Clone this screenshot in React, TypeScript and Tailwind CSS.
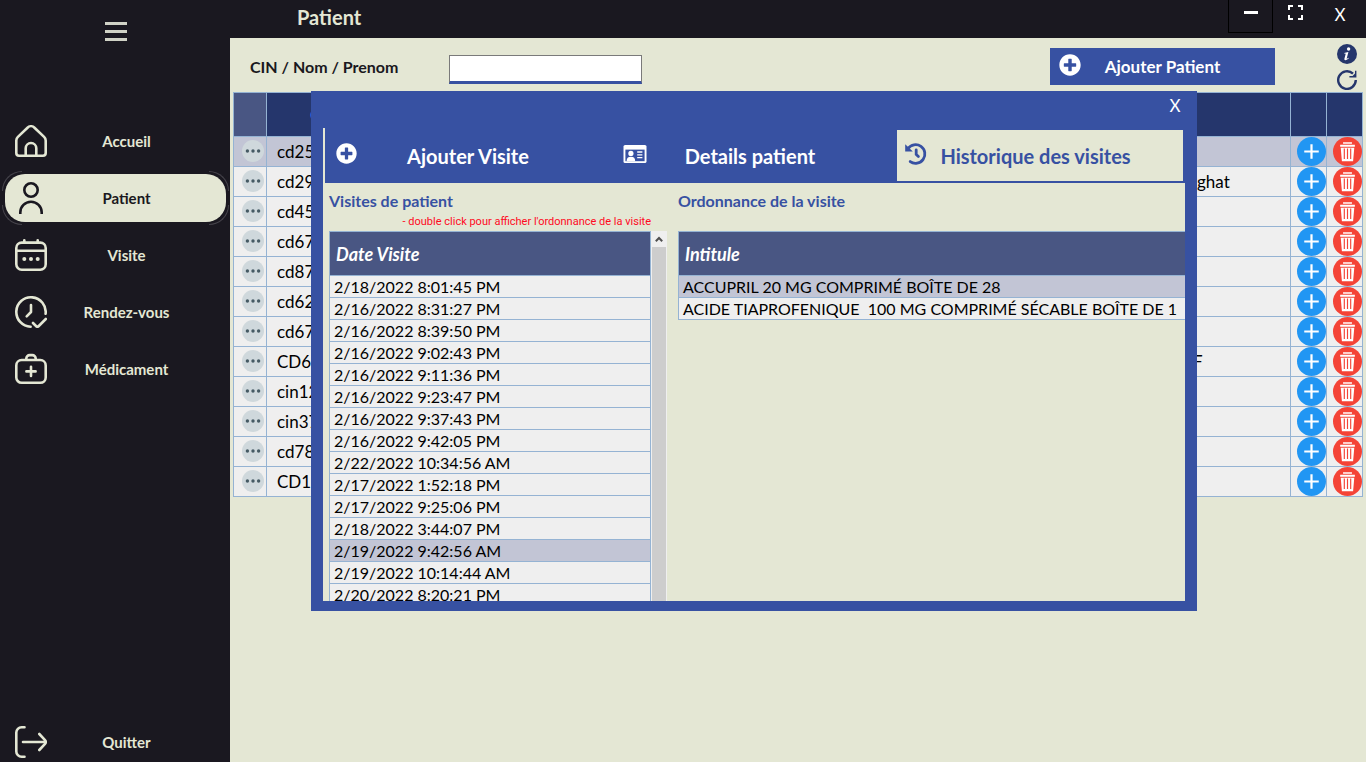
import type { ReactNode } from 'react';
import { FaPlusCircle } from 'react-icons/fa';

const navLine = {
  viewBox: '0 0 32 32',
  fill: 'none',
  stroke: 'currentColor',
  strokeWidth: 2.6,
  strokeLinecap: 'round' as const,
  strokeLinejoin: 'round' as const,
  className: 'size-8 shrink-0',
  'aria-hidden': true,
};

const HomeIcon = () => (
  <svg {...navLine}>
    <path d="M1.3 15.5a5 5 0 0 1 1.6-3.6l9.6-9.2a5 5 0 0 1 7 0l9.6 9.2a5 5 0 0 1 1.6 3.6V28a2.7 2.7 0 0 1-2.7 2.7H4A2.7 2.7 0 0 1 1.3 28z" />
    <path d="M10.7 30.5v-7.2a5.3 5.3 0 0 1 10.6 0v7.2" />
  </svg>
);

const UserIcon = () => (
  <svg {...navLine} strokeLinecap="butt">
    <circle cx="16" cy="8" r="6.7" />
    <path d="M5.3 32v-1.6a10.7 10.7 0 0 1 21.4 0V32" />
  </svg>
);

const CalendarIcon = () => (
  <svg {...navLine}>
    <rect x="1.3" y="3.6" width="29.4" height="27.1" rx="5.4" />
    <path d="M1.3 11.7h29.4M9.3 1.3v2M22.7 1.3v2" />
    <g fill="currentColor" stroke="none">
      <circle cx="9.3" cy="20" r="2" />
      <circle cx="16" cy="20" r="2" />
      <circle cx="22.7" cy="20" r="2" />
    </g>
  </svg>
);

const ClockIcon = () => (
  <svg {...navLine}>
    <path d="M30.6 17.8A14.7 14.7 0 1 0 15.6 30.7" />
    <path d="M16 9v7l-4.3 4.3" />
    <path d="M18 27l3 3a2 2 0 0 0 2.8 0l7-7" />
  </svg>
);

const MedicalIcon = () => (
  <svg {...navLine}>
    <rect x="1.3" y="7" width="29.4" height="22.8" rx="5.4" />
    <path d="M11.3 6.6V5.5a3.4 3.4 0 0 1 3.4-3.4h2.6a3.4 3.4 0 0 1 3.4 3.4v1.1M16 13.8v9.2M11.4 18.4h9.2" />
  </svg>
);

const QuitIcon = () => (
  <svg {...navLine}>
    <path d="M9.5 1.3H6.6a5.3 5.3 0 0 0-5.3 5.3v18.8a5.3 5.3 0 0 0 5.3 5.3h2.9" />
    <path d="M8 16h22.5M24.3 8l5.5 5.8a3.3 3.3 0 0 1 0 4.4L24.3 24" />
  </svg>
);

const CardIcon = () => (
  <svg viewBox="0 0 24 24" className="mb-1 size-6 shrink-0" aria-hidden>
    <rect x="0.5" y="3" width="23" height="18" rx="1.6" fill="#fff" />
    <path d="M2.4 7.6h19.2v11.6H2.4z" fill="#3751a2" />
    <circle cx="7.9" cy="11.4" r="2.6" fill="#fff" />
    <path d="M3.6 19.2c0-3 1.4-4.4 4.3-4.4s4.3 1.4 4.3 4.4z" fill="#fff" />
    <path d="M14.2 10h5.2M14.2 12.8h5.2M14.2 15.6h5.2" stroke="#fff" strokeWidth="1.3" />
  </svg>
);

const HistoryIcon = () => (
  <svg
    viewBox="0 0 24 24"
    fill="none"
    stroke="currentColor"
    strokeWidth="2.8"
    strokeLinecap="round"
    className="mb-1 size-6 shrink-0"
    aria-hidden
  >
    <path d="M4 6.6A9.3 9.3 0 1 1 6.2 19.6" />
    <path d="M12.2 7.8v4.6l2.2 2.2" />
    <path d="M1.2 2.2v7.4h7.6z" fill="currentColor" stroke="none" />
  </svg>
);

const InfoIcon = () => (
  <svg viewBox="0 0 20 20" className="size-5" aria-hidden>
    <circle cx="10" cy="10" r="10" fill="#25366c" />
    <circle cx="11.6" cy="5" r="1.7" fill="#fff" />
    <path d="M7.2 8.9c1.3-.2 2.5-.5 4.2-.8l-1.7 6.4c-.1.5.5.3 1.6-.7l.5.5c-1.5 1.9-4.9 2.9-4.4.5l1.2-4.6c.1-.5-.5-.6-1.5-.6z" fill="#fff" />
  </svg>
);

const ReloadIcon = () => (
  <svg viewBox="0 0 20 20" fill="none" stroke="#25366c" strokeWidth="2.4" className="size-5" aria-hidden>
    <path d="M18.8 10A8.8 8.8 0 1 1 16 3.6" />
    <path d="M19.4.8v6.6h-7l0-1.4h3.2l2.4-2.4V.8z" fill="#25366c" stroke="none" />
  </svg>
);

const MoreIcon = () => (
  <svg viewBox="0 0 22 22" className="ml-2 size-[22px]" aria-hidden>
    <circle cx="11" cy="11" r="11" fill="#cfd8dc" />
    <g fill="#455a64">
      <circle cx="5.4" cy="11" r="1.7" />
      <circle cx="11" cy="11" r="1.7" />
      <circle cx="16.6" cy="11" r="1.7" />
    </g>
  </svg>
);

const AddIcon = () => (
  <svg viewBox="0 0 30 30" className="size-[29px]" aria-hidden>
    <circle cx="15" cy="15" r="15" fill="#2196f3" />
    <path d="M15 7.5v15M7.5 15h15" stroke="#fff" strokeWidth="2.3" />
  </svg>
);

const TrashIcon = () => (
  <svg viewBox="0 0 30 30" className="size-[29px]" aria-hidden>
    <circle cx="15" cy="15" r="15" fill="#f44336" />
    <path d="M10.4 5.4h9.2v1.5h-9.2zM7.4 8h15.2v2.2H7.4zM8 11h14l-1.2 14H9.2z" fill="#fff" />
    <path d="M11.7 12v10.8M15 12v10.8M18.3 12v10.8" stroke="#f44336" strokeWidth="1.2" />
  </svg>
);

const navItems: { label: string; icon: ReactNode; active?: boolean }[] = [
  { label: 'Accueil', icon: <HomeIcon /> },
  { label: 'Patient', icon: <UserIcon />, active: true },
  { label: 'Visite', icon: <CalendarIcon /> },
  { label: 'Rendez-vous', icon: <ClockIcon /> },
  { label: 'Médicament', icon: <MedicalIcon /> },
];

const patients: { cin: string; name?: string }[] = [
  { cin: 'cd25' },
  { cin: 'cd29', name: 'lghat' },
  { cin: 'cd45' },
  { cin: 'cd67' },
  { cin: 'cd87' },
  { cin: 'cd62' },
  { cin: 'cd67' },
  { cin: 'CD6', name: 'F' },
  { cin: 'cin12' },
  { cin: 'cin37' },
  { cin: 'cd78' },
  { cin: 'CD1' },
];

const visits = [
  '2/18/2022 8:01:45 PM',
  '2/16/2022 8:31:27 PM',
  '2/16/2022 8:39:50 PM',
  '2/16/2022 9:02:43 PM',
  '2/16/2022 9:11:36 PM',
  '2/16/2022 9:23:47 PM',
  '2/16/2022 9:37:43 PM',
  '2/16/2022 9:42:05 PM',
  '2/22/2022 10:34:56 AM',
  '2/17/2022 1:52:18 PM',
  '2/17/2022 9:25:06 PM',
  '2/18/2022 3:44:07 PM',
  '2/19/2022 9:42:56 AM',
  '2/19/2022 10:14:44 AM',
  '2/20/2022 8:20:21 PM',
];

const prescriptions = ['ACCUPRIL 20 MG COMPRIMÉ BOÎTE DE 28', 'ACIDE TIAPROFENIQUE  100 MG COMPRIMÉ SÉCABLE BOÎTE DE 1'];

function NavButton({ label, icon, active }: { label: string; icon: ReactNode; active?: boolean }) {
  return (
    <button
      type="button"
      className={
        active
          ? 'relative flex h-12 w-full items-center rounded-[20px] bg-[#e4e7d4] pl-2.5 text-[#1a1820]'
          : 'relative flex h-12 w-full items-center rounded-[20px] pl-2.5 text-[#e4e7d4]'
      }
    >
      {active && (
        <>
          <span className="absolute -top-[3px] -left-[3px] size-5 rounded-tl-[20px] border-t border-l border-[#45434a]" />
          <span className="absolute -top-[3px] -right-[3px] size-5 rounded-tr-[20px] border-t border-r border-[#45434a]" />
          <span className="absolute -bottom-[3px] -left-[3px] size-5 rounded-bl-[20px] border-b border-l border-[#45434a]" />
          <span className="absolute -right-[3px] -bottom-[3px] size-5 rounded-br-[20px] border-r border-b border-[#45434a]" />
        </>
      )}
      {icon}
      <span className="flex-1 pr-5 text-center text-[15px] font-bold">{label}</span>
    </button>
  );
}

function Sidebar() {
  return (
    <aside className="flex w-[230px] shrink-0 flex-col bg-[#1a1820] pr-1 pl-[5px]">
      <button type="button" aria-label="Menu" className="mx-auto mt-[22px] flex w-[22px] flex-col gap-[5px]">
        <span className="h-[3px] w-full bg-[#d0d2c6]" />
        <span className="h-[3px] w-full bg-[#d0d2c6]" />
        <span className="h-[3px] w-full bg-[#d0d2c6]" />
      </button>
      <nav className="mt-[76px] flex flex-1 flex-col gap-[9px]">
        {navItems.map((item) => (
          <NavButton key={item.label} {...item} />
        ))}
        <div className="mt-auto -mb-1">
          <NavButton label="Quitter" icon={<QuitIcon />} />
        </div>
      </nav>
    </aside>
  );
}

function TitleBar() {
  return (
    <header className="flex h-[38px] shrink-0 bg-[#1a1820] text-[#e4e7d4]">
      <h1 className="pt-[3px] pl-[67px] text-xl leading-7 font-bold">Patient</h1>
      <div className="ml-auto flex h-[33px] text-white">
        <button type="button" aria-label="Réduire" className="flex w-[45px] justify-center border border-t-0 border-black pt-[11px]">
          <span className="h-[3px] w-[14px] bg-white" />
        </button>
        <button type="button" aria-label="Agrandir" className="flex w-[45px] justify-center pt-[5px]">
          <svg viewBox="0 0 15 15" fill="none" stroke="#fff" strokeWidth="2" className="size-[15px]" aria-hidden>
            <path d="M1 5V1h4M10 1h4v4M14 10v4h-4M5 14H1v-4" />
          </svg>
        </button>
        <button type="button" aria-label="Fermer" className="w-12 pr-1 pb-1 text-[17px]">
          X
        </button>
      </div>
    </header>
  );
}

function Toolbar() {
  return (
    <div className="flex h-[54px] shrink-0 items-start pr-[9px] pl-5">
      <label htmlFor="search" className="w-[199px] pt-[17px] text-base leading-6 font-bold text-[#1a1820]">
        CIN / Nom / Prenom
      </label>
      <input
        id="search"
        type="text"
        className="mt-[17px] h-[29px] w-[193px] border border-b-[3px] border-[#7a7a7a] border-b-[#3751a2] bg-white px-1 outline-none"
      />
      <button type="button" className="mt-2.5 ml-auto flex h-[37px] w-[225px] items-center bg-[#3751a2] pl-[9px] text-white">
        <FaPlusCircle className="mb-1 size-[22px]" aria-hidden />
        <span className="flex-1 pr-[31px] text-center text-[17px] font-bold">Ajouter Patient</span>
      </button>
      <div className="mt-1.5 ml-[62px] flex flex-col gap-1.5">
        <button type="button" aria-label="Informations">
          <InfoIcon />
        </button>
        <button type="button" aria-label="Actualiser">
          <ReloadIcon />
        </button>
      </div>
    </div>
  );
}

function PatientsTable() {
  const cell = 'border border-[#95b3d3] p-0';
  return (
    <div className="pr-[3px] pl-[3px]">
      <table className="w-full table-fixed border-collapse text-[17px]">
        <colgroup>
          <col className="w-[33px]" />
          <col className="w-[234px]" />
          <col />
          <col className="w-[110px]" />
          <col className="w-9" />
          <col className="w-9" />
        </colgroup>
        <thead>
          <tr className="h-11 bg-[#25366c] text-left text-[#2196f3]">
            <th className={`${cell} bg-[#495683]`} />
            <th className={`${cell} pl-[43px]!`}>CIN</th>
            <th className={cell} />
            <th className={cell} />
            <th className={cell} />
            <th className={cell} />
          </tr>
        </thead>
        <tbody>
          {patients.map((p, i) => (
            <tr key={i} className={i === 0 ? 'h-[30px] bg-[#c2c5d5]' : 'h-[30px] bg-[#efefef]'}>
              <td className={`${cell} pb-0.5!`}>
                <button type="button" aria-label="Détails" className="block">
                  <MoreIcon />
                </button>
              </td>
              <td className={`${cell} pl-2.5! leading-6`}>{p.cin}</td>
              <td className={cell} />
              <td className={`${cell} pl-3! leading-6`}>{p.name}</td>
              <td className={cell}>
                <button type="button" aria-label="Ajouter" className="ml-auto block">
                  <AddIcon />
                </button>
              </td>
              <td className={cell}>
                <button type="button" aria-label="Supprimer" className="ml-auto block">
                  <TrashIcon />
                </button>
              </td>
            </tr>
          ))}
        </tbody>
      </table>
    </div>
  );
}

function DataTable({ title, rows, selected }: { title: string; rows: string[]; selected: number }) {
  return (
    <table className="w-full border-collapse bg-[#efefef] text-base whitespace-pre text-black">
      <thead>
        <tr className="h-11 bg-[#495683] text-left text-white">
          <th className="border border-[#95b3d3] py-0 pl-1.5 text-lg font-bold italic">{title}</th>
        </tr>
      </thead>
      <tbody>
        {rows.map((r, i) => (
          <tr key={r} className={i === selected ? 'h-[22px] bg-[#c2c5d5]' : 'h-[22px]'}>
            <td className="border border-[#95b3d3] pt-px pb-0 pl-1 leading-5">{r}</td>
          </tr>
        ))}
      </tbody>
    </table>
  );
}

function VisitsDialog() {
  const tab = 'flex items-center text-xl font-bold';
  return (
    <section
      role="dialog"
      aria-label="Historique des visites"
      className="absolute top-[91px] right-[169px] left-[81px] flex h-[520px] flex-col bg-[#3751a2] px-3 pb-2.5"
    >
      <div className="flex h-[37px] shrink-0 justify-end">
        <button type="button" aria-label="Fermer" className="h-[30px] w-5 text-[17px] text-white">
          X
        </button>
      </div>
      <div className="flex min-h-0 flex-1 flex-col bg-[#e4e7d4]">
        <div role="tablist" className="ml-0.5 grid h-[55px] shrink-0 grid-cols-3 bg-[#3751a2] py-0.5 pr-0.5 text-white">
          <button type="button" role="tab" aria-selected="false" className={`${tab} pl-[11px]`}>
            <FaPlusCircle className="mb-1 size-[21px]" aria-hidden />
            <span className="flex-1 pr-8 text-center">Ajouter Visite</span>
          </button>
          <button type="button" role="tab" aria-selected="false" className={`${tab} pl-3`}>
            <CardIcon />
            <span className="flex-1 pr-11 text-center">Details patient</span>
          </button>
          <button type="button" role="tab" aria-selected="true" className={`${tab} bg-[#e4e7d4] pl-[7px] text-[#3751a2]`}>
            <HistoryIcon />
            <span className="flex-1 pr-10 text-center">Historique des visites</span>
          </button>
        </div>
        <div className="flex min-h-0 flex-1 overflow-hidden pl-1.5">
          <div className="flex w-[338px] shrink-0 flex-col">
            <h2 className="pt-[7px] text-base leading-[22px] font-bold text-[#3751a2]">Visites de patient</h2>
            <p className="w-[322px] text-right font-[Roboto,sans-serif] text-[11px] leading-[19px] text-[#ff0a1e]">
              - double click pour afficher l'ordonnance de la visite
            </p>
            <div className="flex min-h-0 flex-1 overflow-hidden">
              <div className="w-[322px] shrink-0">
                <DataTable title="Date Visite" rows={visits} selected={12} />
              </div>
              <div className="flex w-4 flex-col items-center bg-[#efefef]">
                <svg viewBox="0 0 16 16" fill="none" stroke="#505050" strokeWidth="2" className="size-4 shrink-0" aria-hidden>
                  <path d="M4.8 10.2L8 7l3.2 3.2" />
                </svg>
                <span className="w-3.5 flex-1 bg-[#cdcdcd]" />
              </div>
            </div>
          </div>
          <div className="ml-[11px] min-w-0 flex-1 overflow-hidden">
            <h2 className="pt-[7px] text-base leading-[22px] font-bold text-[#3751a2]">Ordonnance de la visite</h2>
            <div className="w-[560px] pt-[19px]">
              <DataTable title="Intitule" rows={prescriptions} selected={0} />
            </div>
          </div>
        </div>
      </div>
    </section>
  );
}

export default function App() {
  return (
    <div className="flex min-h-screen overflow-hidden bg-[#e4e7d4] font-['Lato',sans-serif]">
      <Sidebar />
      <main className="relative flex min-w-0 flex-1 flex-col">
        <TitleBar />
        <Toolbar />
        <PatientsTable />
        <VisitsDialog />
      </main>
    </div>
  );
}
